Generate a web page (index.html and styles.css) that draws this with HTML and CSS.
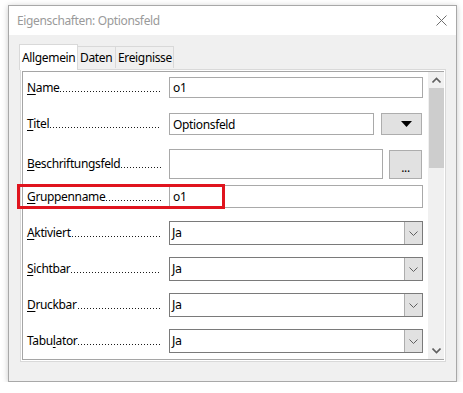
FILE: index.html
```html
<!DOCTYPE html>
<html lang="de">
<head>
<meta charset="utf-8">
<title>Eigenschaften: Optionsfeld</title>
<link rel="stylesheet" href="styles.css">
</head>
<body>
<div class="window">
  <div class="titlebar">
    <span class="title">Eigenschaften: Optionsfeld</span>
    <svg class="close" width="11" height="11" viewBox="0 0 11 11"><path d="M0.5 0.5L10.5 10.5M10.5 0.5L0.5 10.5" stroke="#6f6f6f" stroke-width="1" fill="none"/></svg>
  </div>
  <div class="content">
    <div class="tabs">
      <div class="tab active t-allg">Allgemein</div>
      <div class="tab t-daten">Daten</div>
      <div class="tab t-ereig">Ereignisse</div>
    </div>
    <div class="page">
      <div class="sheet">
        <div class="rows">
          <div class="row r1">
            <div class="label"><span class="ltext"><u>N</u>ame</span><span class="leader"></span></div>
            <div class="input full">o1</div>
          </div>
          <div class="row r2">
            <div class="label"><span class="ltext"><u>T</u>itel</span><span class="leader"></span></div>
            <div class="value">
              <div class="input titel">Optionsfeld</div>
              <div class="btn tri"><svg width="11" height="6" viewBox="0 0 11 6"><path d="M0 0H11L5.5 6Z" fill="#000"/></svg></div>
            </div>
          </div>
          <div class="row r3">
            <div class="label"><span class="ltext"><u>B</u>eschriftungsfeld</span><span class="leader"></span></div>
            <div class="value">
              <div class="input besch"></div>
              <div class="btn dots">...</div>
            </div>
          </div>
          <div class="row r4">
            <div class="label"><span class="ltext"><u>G</u>ruppenname</span><span class="leader"></span></div>
            <div class="input full">o1</div>
          </div>
          <div class="row r5">
            <div class="label"><span class="ltext"><u>A</u>ktiviert</span><span class="leader"></span></div>
            <div class="select"><span class="seltext">Ja</span><span class="selbtn"><svg width="9" height="5" viewBox="0 0 9 5"><path d="M0.5 0.5L4.5 4.5L8.5 0.5" stroke="#606060" fill="none"/></svg></span></div>
          </div>
          <div class="row r6">
            <div class="label"><span class="ltext"><u>S</u>ichtbar</span><span class="leader"></span></div>
            <div class="select"><span class="seltext">Ja</span><span class="selbtn"><svg width="9" height="5" viewBox="0 0 9 5"><path d="M0.5 0.5L4.5 4.5L8.5 0.5" stroke="#606060" fill="none"/></svg></span></div>
          </div>
          <div class="row r7">
            <div class="label"><span class="ltext"><u>D</u>ruckbar</span><span class="leader"></span></div>
            <div class="select"><span class="seltext">Ja</span><span class="selbtn"><svg width="9" height="5" viewBox="0 0 9 5"><path d="M0.5 0.5L4.5 4.5L8.5 0.5" stroke="#606060" fill="none"/></svg></span></div>
          </div>
          <div class="row r8">
            <div class="label"><span class="ltext">Tabu<u>l</u>ator</span><span class="leader"></span></div>
            <div class="select"><span class="seltext">Ja</span><span class="selbtn"><svg width="9" height="5" viewBox="0 0 9 5"><path d="M0.5 0.5L4.5 4.5L8.5 0.5" stroke="#606060" fill="none"/></svg></span></div>
          </div>
        </div>
        <div class="scrollbar">
          <div class="arrow"><svg width="9" height="6" viewBox="0 0 9 6"><path d="M0.5 5.5L4.5 1.5L8.5 5.5" stroke="#606060" stroke-width="1.6" fill="none"/></svg></div>
          <div class="thumb"></div>
          <div class="track"></div>
          <div class="arrow"><svg width="9" height="6" viewBox="0 0 9 6"><path d="M0.5 0.5L4.5 4.5L8.5 0.5" stroke="#606060" stroke-width="1.6" fill="none"/></svg></div>
        </div>
      </div>
      <div class="highlight"></div>
    </div>
  </div>
</div>
</body>
</html>
```

FILE: styles.css
```css
html, body {
  margin: 0;
  padding: 0;
  background: #ffffff;
}

body {
  font-family: "Noto Sans", "Open Sans", sans-serif;
  font-size: 12px;
  letter-spacing: -0.35px;
  color: #000;
}

.window {
  margin: 5px 0 0 8px;
  width: 449px;
  height: 377px;
  box-sizing: border-box;
  border: 1px solid #a8a8a8;
  box-shadow: 0 1px 6px rgba(0, 0, 0, 0.22);
  background: #f0f0f0;
  display: flex;
  flex-direction: column;
}

.titlebar {
  height: 29px;
  background: #ffffff;
  display: flex;
  align-items: center;
  justify-content: space-between;
  padding: 0 9px 0 8px;
  flex: none;
}

.title {
  color: #9a9a9a;
  font-size: 12px;
  line-height: 16px;
}

.close {
  display: block;
}

.content {
  flex: 1;
  padding: 9px 10px 19px 11px;
  display: flex;
  flex-direction: column;
}

.tabs {
  display: flex;
  align-items: flex-end;
  height: 25px;
  margin-left: -1px;
  position: relative;
  z-index: 1;
}

.tab {
  box-sizing: border-box;
  height: 22px;
  border: 1px solid #d9d9d9;
  border-bottom: none;
  background: #f0f0f0;
  padding: 0 0 0 2px;
  line-height: 21px;
  margin-bottom: 1px;
  margin-left: -1px;
  white-space: nowrap;
}

.tab.active {
  height: 26px;
  margin-left: 0;
  margin-bottom: -1px;
  background: #ffffff;
  padding: 2px 0 0 2px;
  line-height: 22px;
}

.t-allg { width: 59px; }
.t-daten { width: 39px; }
.t-ereig { width: 59px; }

.page {
  position: relative;
  height: 293px;
  box-sizing: border-box;
  border: 1px solid #d9d9d9;
  background: #ffffff;
  padding: 1px;
}

.sheet {
  height: 100%;
  box-sizing: border-box;
  border: 1px solid #a5a5a5;
  display: flex;
}

.rows {
  flex: 1;
  padding: 5px 0 0 4px;
  display: flex;
  flex-direction: column;
}

.row {
  display: flex;
  align-items: center;
}

.r1 { height: 21px; }
.r2 { height: 22px; margin-top: 15px; }
.r3 { height: 30px; margin-top: 14px; }
.r4 { height: 23px; margin-top: 6px; }
.r5 { height: 24px; margin-top: 13px; }
.r6 { height: 24px; margin-top: 12px; }
.r7 { height: 24px; margin-top: 12px; }
.r8 { height: 24px; margin-top: 12px; }

.label {
  width: 134px;
  margin-right: 8px;
  flex: none;
  display: flex;
  align-items: baseline;
  line-height: 16px;
  white-space: nowrap;
}

.ltext {
  flex: none;
}

.label u {
  text-decoration-thickness: 1px;
  text-underline-offset: 2px;
}

.leader {
  flex: 1;
  height: 1px;
  margin-left: 1px;
  background-image: linear-gradient(to right, #1a1a1a 1px, transparent 1px);
  background-size: 3px 1px;
  background-repeat: repeat-x;
}

.input {
  box-sizing: border-box;
  height: 100%;
  border: 1px solid #a9a9a9;
  background: #ffffff;
  padding: 0 3px;
  display: flex;
  align-items: center;
}

.input.full {
  width: 254px;
}

.value {
  display: flex;
  height: 100%;
  width: 254px;
  align-items: center;
}

.input.titel {
  width: 205px;
}

.input.besch {
  width: 214px;
}

.btn {
  box-sizing: border-box;
  background: #e1e1e1;
  border: 1px solid #adadad;
  display: flex;
  align-items: center;
  justify-content: center;
}

.btn.tri {
  width: 41px;
  height: 22px;
  margin-left: 7px;
}

.btn.tri svg {
  margin-left: 10px;
}

.btn.dots {
  width: 33px;
  height: 29px;
  margin-left: 6px;
  align-items: flex-end;
  padding-bottom: 5px;
  line-height: 10px;
}

.select {
  box-sizing: border-box;
  width: 254px;
  height: 100%;
  border: 1px solid #7a7a7a;
  background: #ffffff;
  display: flex;
  align-items: stretch;
}

.seltext {
  flex: 1;
  padding-left: 2px;
  display: flex;
  align-items: center;
  font-family: "DejaVu Sans", sans-serif;
  font-size: 11.5px;
  letter-spacing: -0.3px;
}

.selbtn {
  width: 18px;
  box-sizing: border-box;
  background: #e1e1e1;
  border-left: 1px solid #adadad;
  display: flex;
  align-items: center;
  justify-content: center;
}

.scrollbar {
  width: 16px;
  flex: none;
  margin-left: 5px;
  background: #f0f0f0;
  display: flex;
  flex-direction: column;
  align-items: center;
}

.arrow {
  height: 16px;
  width: 16px;
  display: flex;
  align-items: center;
  justify-content: center;
}

.thumb {
  width: 15px;
  height: 80px;
  background: #cdcdcd;
}

.track {
  flex: 1;
}

.highlight {
  position: absolute;
  left: -4px;
  top: 114px;
  width: 208px;
  height: 25px;
  box-sizing: border-box;
  border: 3px solid #e0141e;
}
```
